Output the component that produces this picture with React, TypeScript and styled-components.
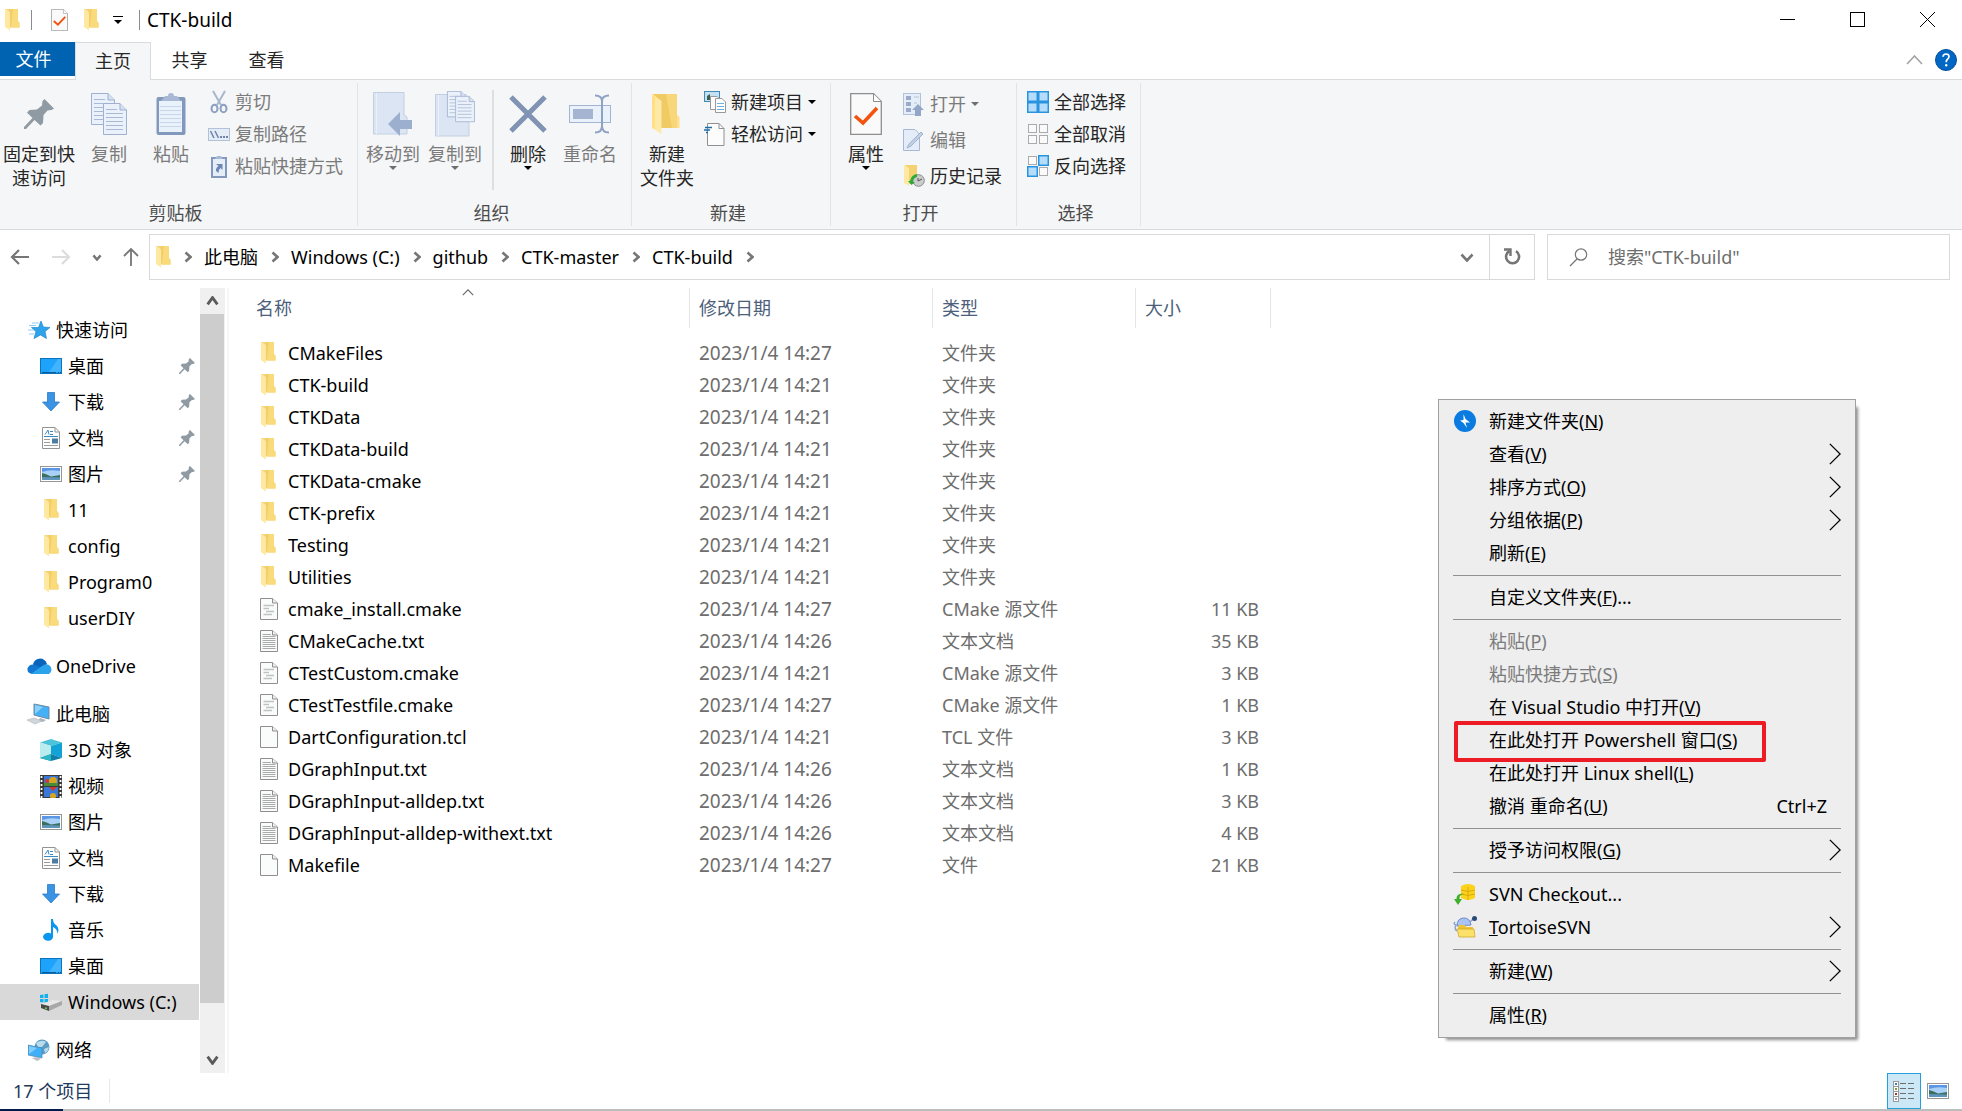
import React from "react";
import styled, { createGlobalStyle, css } from "styled-components";

const GlobalStyle = createGlobalStyle`
  * { box-sizing: border-box; }
  body {
    margin: 0;
    background: #fff;
    color: #000;
    font: 18px/24px "Noto Sans", "Noto Sans CJK SC", sans-serif;
  }
  button, input { font: inherit; color: inherit; }
  button { border: 0; padding: 0; background: none; }
  svg { display: block; flex: none; }
`;

/* ---------- window frame ---------- */

const Window = styled.div`
  position: relative;
  min-height: 100vh;
  display: flex;
  flex-direction: column;
`;

const TitleBar = styled.header`
  display: flex;
  height: 42px;
  padding-left: 5px;
`;

const QuickTools = styled.div`
  display: flex;
  align-items: center;
  height: 40px;
  flex: 1;
`;

const TitleDivider = styled.span`
  width: 1px;
  height: 20px;
  margin: 0 ${(p: { $after: number }) => p.$after}px 0 11px;
  background: #8c8c8c;
`;

const ToolButton = styled.button<{ $narrow?: boolean }>`
  display: grid;
  place-items: center;
  width: ${(p) => (p.$narrow ? 21 : 32)}px;
  height: 32px;
`;

const WindowTitle = styled.h1`
  margin: 0;
  font: inherit;
  font-size: 19px;
`;

const CaptionButton = styled.button`
  display: grid;
  place-items: center;
  width: 70px;
  height: 39px;
`;

/* ---------- tabs ---------- */

const TabBar = styled.nav`
  display: flex;
  height: 38px;
  border-bottom: 1px solid #dadbdc;
`;

const FileTab = styled.button`
  width: 75px;
  height: 34px;
  padding-right: 8px;
  background: #0063b1;
  color: #fff;
`;

const Tab = styled.button<{ $active?: boolean }>`
  width: ${(p) => (p.$active ? 76 : 77)}px;
  height: 38px;
  padding-bottom: 2px;
  color: #262626;
  ${(p) =>
    p.$active &&
    css`
      background: #f5f6f7;
      border: 1px solid #dadbdc;
      border-bottom: 0;
    `}
`;

const TabTools = styled.div`
  display: flex;
  align-items: center;
  gap: 12px;
  margin-left: auto;
  padding: 0 5px 2px 0;
`;

/* ---------- ribbon ---------- */

const Ribbon = styled.div`
  display: flex;
  padding: 3px 0;
  background: #f5f6f7;
  border-bottom: 1px solid #dadbdc;
`;

const Group = styled.section`
  display: flex;
  flex-direction: column;
  height: 143px;
  padding-top: 3px;
  border-right: 1px solid #e2e3e4;
`;

const GroupBody = styled.div<{ $flush?: boolean }>`
  display: flex;
  height: 115px;
  padding: 0 10px 0 ${(p) => (p.$flush ? 0 : 4)}px;
`;

const GroupName = styled.h2`
  margin: 0;
  padding-right: 6px;
  font: inherit;
  color: #4c4c4c;
  text-align: center;
`;

const BigButton = styled.button<{ $wide?: boolean }>`
  display: flex;
  flex-direction: column;
  align-items: center;
  width: ${(p) => (p.$wide ? 78 : 62)}px;
  padding-top: 4px;
  white-space: nowrap;
  color: #262626;
  &:disabled { color: #7b7b7b; }
`;

const BigIcon = styled.span`
  display: grid;
  place-items: center;
  height: 48px;
  margin-bottom: 4px;
`;

const SmallColumn = styled.div<{ $row: number }>`
  display: grid;
  grid-auto-rows: ${(p) => p.$row}px;
  align-content: start;
  padding: 0 4px 0 6px;
`;

const SmallButton = styled.button`
  display: flex;
  align-items: center;
  gap: 5px;
  white-space: nowrap;
  color: #262626;
  &:disabled { color: #7b7b7b; }
`;

const SmallIcon = styled.span`
  display: grid;
  place-items: center;
  width: 22px;
  height: 24px;
`;

const InnerDivider = styled.span`
  width: 2px;
  height: 100px;
  margin: 4px 3px 0 6px;
  background: #dedfe1;
`;

/* ---------- address row ---------- */

const AddressRow = styled.div`
  display: flex;
  align-items: center;
  height: 58px;
  padding: 0 12px 4px 0;
`;

const NavButtons = styled.div`
  display: flex;
  align-items: center;
  justify-content: space-between;
  width: 149px;
  padding: 0 10px;
`;

const AddressBox = styled.div`
  display: flex;
  flex: 1;
  height: 46px;
  margin-right: 12px;
  border: 1px solid #d9d9d9;
`;

const Crumbs = styled.ol`
  display: flex;
  align-items: center;
  gap: 12px;
  flex: 1;
  margin: 0;
  padding: 0 6px;
  list-style: none;
`;

const Crumb = styled.li`
  display: flex;
  align-items: center;
  gap: 13px;
`;

const CrumbLink = styled.a`
  color: #000;
  text-decoration: none;
`;

const AddressButton = styled.button<{ $divided?: boolean }>`
  display: grid;
  place-items: center;
  width: 45px;
  border-left: ${(p) => (p.$divided ? "1px solid #d9d9d9" : "0")};
`;

const SearchBox = styled.label`
  display: flex;
  align-items: center;
  gap: 20px;
  width: 403px;
  height: 46px;
  padding-left: 21px;
  border: 1px solid #d9d9d9;
`;

const SearchInput = styled.input`
  flex: 1;
  min-width: 0;
  border: 0;
  padding: 0;
  outline: 0;
  background: none;
  &::placeholder { color: #6d6d6d; opacity: 1; }
`;

/* ---------- navigation pane ---------- */

const Main = styled.main`
  display: flex;
  flex: 1;
`;

const Sidebar = styled.aside`
  display: flex;
  flex-direction: column;
  gap: 12px;
  width: 199px;
  margin-right: 1px;
  padding-top: 24px;
`;

const TreeGroup = styled.ul`
  margin: 0;
  padding: 0;
  list-style: none;
`;

const TreeItem = styled.a<{ $root?: boolean; $selected?: boolean }>`
  display: flex;
  align-items: center;
  height: 36px;
  padding: 0 4px 0 ${(p) => (p.$root ? 27 : 39)}px;
  background: ${(p) => (p.$selected ? "#d9d9d9" : "none")};
  color: #000;
  text-decoration: none;
  white-space: nowrap;
`;

const TreeIcon = styled.span`
  display: grid;
  place-items: center;
  width: 24px;
  margin-right: 5px;
`;

const TreeLabel = styled.span`
  flex: 1;
`;

const Scrollbar = styled.div`
  display: flex;
  flex-direction: column;
  width: 25px;
  margin-right: 2px;
  background: #f0f0f0;
`;

const ScrollButton = styled.button`
  display: grid;
  place-items: center;
  height: 26px;
`;

const ScrollTrack = styled.div`
  display: flex;
  flex-direction: column;
  flex: 1;
`;

const ScrollThumb = styled.div`
  width: 24px;
  height: 94%;
  background: #cdcdcd;
`;

/* ---------- file list ---------- */

const ListPane = styled.div`
  flex: 1;
  border-left: 2px solid #f6f6f6;
`;

const Table = styled.table`
  table-layout: fixed;
  width: 1042px;
  border-collapse: collapse;
`;

const Col = styled.col<{ $width: number }>`
  width: ${(p) => p.$width}px;
`;

const HeadCell = styled.th`
  height: 49px;
  padding: 0;
  font-weight: 400;
  text-align: left;
  vertical-align: top;
`;

const HeadLabel = styled.div<{ $first?: boolean }>`
  position: relative;
  display: flex;
  align-items: center;
  height: 40px;
  padding-left: ${(p) => (p.$first ? 27 : 9)}px;
  border-right: 1px solid #e5e5e5;
  color: #4c607a;
`;

const SortMark = styled.span`
  position: absolute;
  top: 1px;
  left: 0;
  right: 0;
  display: flex;
  justify-content: center;
  padding-left: 18px;
`;

const Cell = styled.td<{ $right?: boolean }>`
  height: 32px;
  padding: 0 ${(p) => (p.$right ? 12 : 0)}px 0 9px;
  color: #6d6d6d;
  text-align: ${(p) => (p.$right ? "right" : "left")};
  white-space: nowrap;
`;

const DateCell = styled(Cell)`
  font-size: 19px;
`;

const NameCell = styled(Cell)`
  padding-left: 29px;
  color: #000;
`;

const FileName = styled.span`
  display: flex;
  align-items: center;
  gap: 9px;
`;

const FileIconSlot = styled.span`
  display: grid;
  place-items: center;
  width: 21px;
`;

/* ---------- status bar ---------- */

const StatusBar = styled.footer`
  display: flex;
  align-items: center;
  height: 36px;
  padding: 0 7px 0 13px;
  color: #1e395b;
`;

const StatusText = styled.span`
  padding-right: 17px;
  border-right: 1px solid #e8e8e8;
`;

const ViewButtons = styled.div`
  display: flex;
  align-items: center;
  margin-left: auto;
`;

const ViewButton = styled.button<{ $on?: boolean }>`
  display: grid;
  place-items: center;
  width: 34px;
  height: 36px;
  ${(p) =>
    p.$on &&
    css`
      background: #cce8f6;
      border: 1px solid #26a0da;
    `}
`;

const WindowEdge = styled.div`
  height: 2px;
  background: linear-gradient(to right, #001c4d 63px, #bdbdbd 63px);
`;

/* ---------- context menu ---------- */

const Menu = styled.div`
  position: absolute;
  top: 399px;
  right: 106px;
  width: 418px;
  padding: 4px 0 6px;
  background: #eeeeee;
  border: 1px solid #a0a0a0;
  box-shadow: 5px 5px 3px -3px #8c8c8c;
`;

const MenuItem = styled.button`
  position: relative;
  display: flex;
  align-items: center;
  width: 100%;
  height: 33px;
  padding: 0 14px;
  text-align: left;
  white-space: nowrap;
  &:disabled { color: #7c7c7c; }
`;

const MenuIcon = styled.span`
  display: grid;
  place-items: center;
  width: 24px;
  margin-right: 12px;
`;

const MenuLabel = styled.span`
  flex: 1;
`;

const Shortcut = styled.span`
  margin-right: 14px;
`;

const MenuDivider = styled.hr`
  height: 1px;
  margin: 6px 14px 4px;
  border: 0;
  background: #919191;
`;

const Highlight = styled.span`
  position: absolute;
  top: -2px;
  left: 15px;
  width: 312px;
  height: 41px;
  border: 4px solid #ed1c24;
  border-radius: 2px;
`;

/* ---------- drawings ---------- */

const Caret = ({ color = "#000" }: { color?: string }) => (
  <svg width="8" height="4" viewBox="0 0 8 4"><path d="M0 0h8L4 4z" fill={color} /></svg>
);

const Chevron = ({ w, h, dir, stroke = 1, color = "#000" }: { w: number; h: number; dir: "up" | "down" | "right"; stroke?: number; color?: string }) => {
  const p = stroke / 2 + 0.2;
  const d = {
    up: `M${p} ${h - p}L${w / 2} ${p}L${w - p} ${h - p}`,
    down: `M${p} ${p}L${w / 2} ${h - p}L${w - p} ${p}`,
    right: `M${p} ${p}L${w - p} ${h / 2}L${p} ${h - p}`,
  }[dir];
  return <svg width={w} height={h} viewBox={`0 0 ${w} ${h}`}><path d={d} fill="none" stroke={color} strokeWidth={stroke} /></svg>;
};

const Folder = () => (
  <svg width="15" height="22" viewBox="0 0 15 22">
    <path d="M4 0H13V12L14.500 14V18.500H4z" fill="#f3cf6a" />
    <path d="M8 0H13V12L14.500 14V18.500H6z" fill="#f9db7c" />
    <path d="M0 0L5 3.500V21.500L0 18z" fill="#ffe9a2" />
    <path d="M0 0H4L5 3.500z" fill="#f5d67c" />
  </svg>
);

const BigFolder = () => (
  <svg width="30" height="42" viewBox="0 0 30 42">
    <path d="M24 34L30 33L22 35z" fill="#ddd" />
    <path d="M0 1H25V22L27.500 24V35H8z" fill="#ffe08a" />
    <path d="M1 1H25L22 35H8V8z" fill="#f0cb63" />
    <path d="M14 1H25V35H20z" fill="#f8d77a" />
    <path d="M0 1L9.500 8V41L0 35z" fill="#ffe9a8" />
    <path d="M0 2L3 4V36L0 35z" fill="#ffdf80" />
  </svg>
);

const CheckPage = ({ w, h }: { w: number; h: number }) => (
  <svg width={w} height={h} viewBox="0 0 32 42">
    <path d="M.7.7H23.500L31.300 8.500V41.300H.7z" fill="#fafafa" stroke="#8e8e8e" strokeWidth="1.300" />
    <path d="M23.500 1V8.500H31" fill="#fff" stroke="#8e8e8e" />
    <path d="M5 23L13 30L27 15" fill="none" stroke="#f2540f" strokeWidth="3.600" />
  </svg>
);

const Pin = ({ size, color = "#8f9aa3" }: { size: number; color?: string }) => (
  <svg width={size} height={size} viewBox="0 0 30 30">
    <path d="M20.500 0L30 9.500L27.500 11L23.500 11.500L19.500 16L19 24L16.500 26.500L10.500 21L2 30H0V28L8.500 19L3 13.500L5.500 11L13 10.500L18 6.500L18.500 2z" fill={color} />
  </svg>
);

const PageShape = ({ x, y }: { x: number; y: number }) => (
  <g transform={`translate(${x} ${y})`}>
    <path d="M.5.5H17L23.500 7V31.500H.5z" fill="#eaf1fa" stroke="#9fb1cf" />
    <path d="M17 .5V7H23.500" fill="#d4e0f0" stroke="#9fb1cf" />
    <path d="M3 6.500H14M3 10.500H20M3 14.500H20M3 18.500H20M3 22.500H20M3 26.500H20" stroke="#a9bad4" />
  </g>
);

const CopyIcon = () => <svg width="36" height="43" viewBox="0 0 36 43"><PageShape x={0} y={0} /><PageShape x={12} y={10} /></svg>;

const PasteIcon = () => (
  <svg width="30" height="44" viewBox="0 0 30 44">
    <rect x=".5" y="5" width="29" height="38" rx="2" fill="#8298bd" />
    <path d="M3 9H26V40H3z" fill="#e9f1fb" />
    <path d="M4 14.500H25M4 18.500H25M4 22.500H25M4 26.500H25M4 30.500H25M4 34.500H25" stroke="#c7d6ea" />
    <path d="M5 9L9 4H12Q12 1 15 1Q18 1 18 4H21L25 9z" fill="#a9b9d3" />
  </svg>
);

const ScissorsIcon = () => (
  <svg width="18" height="24" viewBox="0 0 18 24">
    <path d="M3 1L11 15M15 1L7 15" stroke="#a9b7cd" strokeWidth="2" />
    <ellipse cx="4.500" cy="18.500" rx="3" ry="3.700" fill="none" stroke="#8ca0c2" strokeWidth="2" />
    <ellipse cx="13.500" cy="18.500" rx="3" ry="3.700" fill="none" stroke="#8ca0c2" strokeWidth="2" />
  </svg>
);

const PathIcon = () => (
  <svg width="22" height="13" viewBox="0 0 22 13">
    <rect x=".5" y=".5" width="21" height="12" fill="#e3ecf7" stroke="#b2c1d8" />
    <path d="M2.500 3L6 10M7 3L10.500 10" stroke="#6f84a6" strokeWidth="1.500" />
    <path d="M12 9h2M15 9h2M18 9h2" stroke="#6f84a6" strokeWidth="2" />
  </svg>
);

const ShortcutIcon = () => (
  <svg width="16" height="23" viewBox="0 0 16 23">
    <rect x="1" y="3" width="14" height="19" fill="#e4edf8" stroke="#8298bd" strokeWidth="2" />
    <path d="M4 4L6 1H10L12 4z" fill="#a9b9d3" />
    <path d="M5 9H11.500V15L9.500 13Q7.500 14.500 7.500 18L5 16Q4.500 13 7.500 11z" fill="#6f87b0" />
  </svg>
);

const MoveIcon = () => (
  <svg width="40" height="44" viewBox="0 0 40 44">
    <path d="M.5.5H31V23L34 25V42H.5z" fill="#dbe5f3" stroke="#c2cfe3" />
    <path d="M3.500 1V42" stroke="#eaf0f9" />
    <path d="M15 32L27 20V28H39V37H27V44z" fill="#9dafcf" />
  </svg>
);

const CopyToIcon = () => (
  <svg width="40" height="46" viewBox="0 0 40 46">
    <path d="M.5 3.500H31V30L34 32V45H.5z" fill="#dbe5f3" stroke="#c2cfe3" />
    <path d="M3.500 4V45" stroke="#eaf0f9" />
    <g transform="translate(12 0) scale(.82)"><PageShape x={0} y={0} /><PageShape x={10} y={6} /></g>
  </svg>
);

const DeleteIcon = () => <svg width="38" height="38" viewBox="0 0 38 38"><path d="M2 2L36 36M36 2L2 36" stroke="#8093b3" strokeWidth="5" /></svg>;

const RenameIcon = () => (
  <svg width="43" height="40" viewBox="0 0 43 40">
    <rect x=".5" y="11.500" width="41" height="17" fill="#e9f1fb" stroke="#a3b4d0" />
    <rect x="4" y="15" width="20" height="10" fill="#a5b5d1" />
    <path d="M26 1.500Q33 1.500 33 7V32Q33 38.500 26 38.500M40 1.500Q33 1.500 33 7M33 32Q33 38.500 40 38.500" fill="none" stroke="#8fa2c4" strokeWidth="2" />
  </svg>
);

const NewItemIcon = () => (
  <svg width="22" height="22" viewBox="0 0 22 22">
    <rect x=".5" y=".5" width="15" height="10" fill="#c6e2f2" stroke="#3f8bb5" />
    <path d="M3 9V5L6 3V9z" fill="#3d5f50" />
    <path d="M6.500 5.500H13L16 8.500V18.500H6.500z" fill="#fff" stroke="#999" />
    <path d="M11.500 7.500H18L21.500 11V21.500H11.500z" fill="#fff" stroke="#999" />
    <path d="M13 12.500H20M13 15.500H20M13 18.500H20" stroke="#6eaee0" />
  </svg>
);

const EasyAccessIcon = () => (
  <svg width="22" height="23" viewBox="0 0 22 23">
    <path d="M3.500.5H15L20 5.500V22.500H3.500z" fill="#fcfcfc" stroke="#909090" />
    <path d="M15 .5V5.500H20" fill="none" stroke="#909090" />
    <path d="M1 4.500H8M0 7H6M2 9.500H4" stroke="#1f6ea8" strokeWidth="1.500" />
  </svg>
);

const OpenIcon = () => (
  <svg width="22" height="23" viewBox="0 0 22 23">
    <rect x=".5" y=".5" width="17" height="21" fill="#e5edf8" stroke="#b4c2d9" />
    <path d="M3 3h5v4H3zM3 9h5v4H3zM3 15h5v4H3z" fill="#9aabc9" />
    <path d="M11 4h5M11 10h3" stroke="#b4c2d9" />
    <path d="M15 11L21 17H18V23H12V17H9z" fill="#93a6c8" />
  </svg>
);

const EditIcon = () => (
  <svg width="22" height="22" viewBox="0 0 22 22">
    <path d="M.5.5H12L16.500 5V21.500H.5z" fill="#e3ecf8" stroke="#a8b8d3" />
    <path d="M4 19L6 15L18 3L20 5L8 17z" fill="#c3d0e4" stroke="#93a6c8" strokeWidth=".8" />
  </svg>
);

const HistoryIcon = () => (
  <svg width="22" height="22" viewBox="0 0 22 22">
    <path d="M2 0H14V19H5z" fill="#f5d270" /><path d="M1 0L6 3V21L1 18z" fill="#ffe9a2" />
    <circle cx="15.500" cy="15.500" r="5.800" fill="#ccc" stroke="#8b8b8b" />
    <path d="M15 13v3l4-2" fill="none" stroke="#555" />
    <path d="M5 16H7Q8 10 14 9V12Q10 13 10 17H12L8.500 20z" fill="#2cab3a" />
  </svg>
);

const SelectIcon = ({ on }: { on: boolean[] }) => (
  <svg width="22" height="22" viewBox="0 0 22 22">
    {on.map((lit, i) => (
      <rect key={i} x={(i % 2) * 11 + (lit ? 0.75 : 1.5)} y={Math.floor(i / 2) * 11 + (lit ? 0.75 : 1.5)}
        width={lit ? 9.5 : 8} height={lit ? 9.5 : 8} fill={lit ? "#b5ddfb" : "#fafafa"}
        stroke={lit ? "#2a93e0" : "#ababab"} strokeWidth={lit ? 1.5 : 1} />
    ))}
  </svg>
);

const HelpIcon = () => (
  <svg width="22" height="22" viewBox="0 0 22 22">
    <circle cx="11" cy="11" r="10.500" fill="#0067c5" stroke="#07509a" />
    <path d="M8 7.800Q8.200 5 11 5Q14 5 14 7.600Q14 9.200 12.500 10.200Q11.200 11.100 11.200 13.200" fill="none" stroke="#fff" strokeWidth="1.700" />
    <circle cx="11.200" cy="16.200" r="1.200" fill="#fff" />
  </svg>
);

const Arrow = ({ dir, color }: { dir: "left" | "right"; color: string }) => (
  <svg width="20" height="16" viewBox="0 0 20 16">
    <path d={dir === "left" ? "M9 1L2 8L9 15M2 8H19" : "M11 1L18 8L11 15M18 8H1"} fill="none" stroke={color} strokeWidth="2.200" />
  </svg>
);

const UpArrow = () => <svg width="16" height="20" viewBox="0 0 16 20"><path d="M1 9L8 2L15 9M8 2V19" fill="none" stroke="#767676" strokeWidth="1.800" /></svg>;

const RefreshIcon = () => (
  <svg width="17" height="18" viewBox="0 0 17 18">
    <path d="M12 3.200A6.500 6.500 0 1 1 5.500 3" fill="none" stroke="#757575" strokeWidth="2.600" />
    <path d="M0 1.500H6.500V8" fill="none" stroke="#757575" strokeWidth="2.400" />
  </svg>
);

const SearchIcon = () => (
  <svg width="19" height="19" viewBox="0 0 19 19">
    <circle cx="12" cy="6.500" r="5.700" fill="none" stroke="#757575" strokeWidth="1.200" /><path d="M8 11L1 18" stroke="#757575" strokeWidth="1.300" />
  </svg>
);

const StarIcon = () => (
  <svg width="22" height="18" viewBox="0 0 22 18">
    <path d="M13 0L15.300 6L22 6.500L17 10.500L18.500 17.500L12.500 14L6 17.500L8 10.500L3.500 6.500H10.500z" fill="#2fa3ea" stroke="#1e86cc" strokeWidth=".7" />
    <path d="M4 2H11M1 4.500H8M0 9H6M1 13H6" stroke="#8fcdf3" />
  </svg>
);

const DesktopIcon = () => (
  <svg width="22" height="16" viewBox="0 0 22 16">
    <rect x=".5" y=".5" width="21" height="15" fill="#1ea3fc" stroke="#0b74bd" />
    <path d="M9 14L18 1H21V14z" fill="#41b3ff" />
    <path d="M2 14.500H16M18 14.500h1M20 14.500h1" stroke="#0a5d9b" />
  </svg>
);

const DownloadIcon = () => <svg width="18" height="20" viewBox="0 0 18 20"><path d="M5.500.5H12.500V10H17.500L9 19L.5 10H5.500z" fill="#3b93e3" stroke="#2a7cc8" strokeWidth=".8" /></svg>;

const DocumentIcon = () => (
  <svg width="18" height="22" viewBox="0 0 18 22">
    <path d="M.5.500H13L17.500 5V21.500H.5z" fill="#fff" stroke="#949494" /><path d="M13 .5V5H17.500" fill="none" stroke="#949494" />
    <path d="M3 7.500L6 3L7 7.500M8 4.500H11M8 7.500H11M2 9.500H16" fill="none" stroke="#3c8ac4" />
    <path d="M2 12.500H8M2 15.500H8M2 18.500H16" stroke="#9b9b9b" /><rect x="10" y="11.500" width="6" height="5" fill="#4c7ba3" />
  </svg>
);

const PictureIcon = () => (
  <svg width="22" height="16" viewBox="0 0 22 16">
    <rect x=".5" y=".5" width="21" height="15" fill="#fff" stroke="#969696" />
    <path d="M2 2H20V14H2z" fill="#a9d1f7" /><path d="M2 2H20V5Q10 3 2 6z" fill="#5a95e6" />
    <path d="M2 7Q7 8 11 10.500L20 9V12H2z" fill="#3d6f5e" /><path d="M2 11L20 11.500V14H2z" fill="#5f95bd" />
  </svg>
);

const CloudIcon = () => (
  <svg width="25" height="17" viewBox="0 0 25 17">
    <path d="M6 8Q6 1 13 .5Q18 .5 20 6L12 12z" fill="#0a64bc" />
    <path d="M5 16Q0 15 .5 10.500Q2 6 7 6.500L15 10L10 16z" fill="#1377d1" />
    <path d="M4 16L15 8Q20 4.500 23.500 8.500Q26 13 22 16z" fill="#2ba3ec" />
  </svg>
);

const ComputerIcon = () => (
  <svg width="24" height="22" viewBox="0 0 24 22">
    <path d="M7 1L22 4V16L7 12z" fill="#45b0f5" stroke="#6d8ba2" /><path d="M8 2L16 4L8 11z" fill="#8bd0fb" />
    <path d="M13 15L19 17L16 19L11 18z" fill="#a9b4bc" /><path d="M0 17L7 15L15 18L8 21z" fill="#d0d6da" stroke="#aeb6bc" strokeWidth=".6" />
  </svg>
);

const CubeIcon = () => (
  <svg width="22" height="22" viewBox="0 0 22 22">
    <path d="M11 0L22 3.500L11 7L0 3.500z" fill="#4cc3d9" /><path d="M0 3.500L11 7V15L0 19z" fill="#b9ecef" />
    <path d="M22 3.500L11 7V15L22 19z" fill="#11a3d6" /><path d="M0 19L11 15L22 19L11 22z" fill="#0d7fa8" />
    <path d="M0 19L11 15V22z" fill="#2bb6c4" />
  </svg>
);

const VideoIcon = () => (
  <svg width="22" height="23" viewBox="0 0 22 23">
    <rect width="22" height="23" fill="#3a3a3a" /><rect x="4" y="1" width="14" height="10" fill="#3a78d8" /><rect x="4" y="12" width="14" height="10" fill="#3a78d8" />
    <path d="M1.500 1V23M20.500 1V23" stroke="#fff" strokeWidth="1.800" strokeDasharray="2 2" />
    <circle cx="13" cy="6" r="4" fill="#d8a520" /><path d="M4 8H18V11H4z" fill="#4a8b35" /><circle cx="7" cy="6" r="2" fill="#d2392b" />
    <path d="M9 12h8l-4 4z" fill="#d2392b" /><circle cx="13" cy="21" r="3" fill="#d8a520" />
  </svg>
);

const MusicIcon = () => (
  <svg width="17" height="22" viewBox="0 0 17 22">
    <path d="M8 0H10Q10 4 13 6Q17 9 14.500 15Q14.500 10 10 8V17A5 4 0 1 1 8 14.500z" fill="#0a95f0" />
  </svg>
);

const DriveIcon = () => (
  <svg width="24" height="20" viewBox="0 0 24 20">
    <path d="M1 3L4.500 2.500V6H1zM5.500 2.300L9 1.800V6H5.500zM1 7H4.500V10.500L1 10zM5.500 7H9V11L5.500 10.500z" fill="#12b1ee" />
    <path d="M2 12L14 8L23 9L10 14z" fill="#e7e7e7" /><path d="M10 14L23 9V13L10 19z" fill="#a8a8a8" /><path d="M2 12L10 14V19L2 16z" fill="#484848" /><path d="M6 16l2 .5" stroke="#6bd34c" strokeWidth="1.500" />
  </svg>
);

const NetworkIcon = () => (
  <svg width="22" height="22" viewBox="0 0 22 22">
    <circle cx="14" cy="8" r="7.500" fill="#5b9cc4" /><path d="M8 4Q14 0 18 3L14 8L10 8zM16 10L21 8Q20 13 17 14z" fill="#b8dceb" />
    <path d="M0 6L14 9V19L0 16z" fill="#3fb0f7" stroke="#4f85ab" strokeWidth=".7" /><path d="M1 7L9 9L1 15z" fill="#84cdfb" />
    <path d="M4 19L9 18L13 20L9 22z" fill="#b9c1c7" />
  </svg>
);

const FileIcon = ({ kind }: { kind: string }) => (
  <svg width="18" height="22" viewBox="0 0 18 22">
    <path d="M.5.500H12.500L17.500 5V21.500H.5z" fill="#fafbfb" stroke="#8f8f8f" /><path d="M12.500.5V5H17.500" fill="#eee" stroke="#8f8f8f" />
    {kind === "text" && <path d="M2.500 4.500H11M2.500 6.500H15.500M2.500 8.500H15.500M2.500 10.500H15.500M2.500 12.500H15.500M2.500 14.500H15.500M2.500 16.500H15.500M2.500 18.500H15.500" stroke="#aaa" />}
    {kind === "cmake" && <path d="M3.500 7.500H14M3.500 10.500H9M6 13.500H14M3.500 16.500H12" stroke="#bfc3c4" strokeWidth="1.300" />}
  </svg>
);

const DetailsViewIcon = () => (
  <svg width="22" height="22" viewBox="0 0 22 22">
    {[0, 1, 2, 3].map((i) => (
      <g key={i}>
        <rect x=".5" y={i * 5 + 1.5} width="5" height="5" fill="#fff" stroke="#999" />
        <rect x="2" y={i * 5 + 3} width="2" height="2" fill={["#4a7fa8", "#8a9a3a", "#a83a2c", "#999"][i]} />
        <path d={`M7 ${i * 5 + 3.5}h6M15 ${i * 5 + 3.5}h6`} stroke="#6e6e6e" />
      </g>
    ))}
  </svg>
);

const BoltIcon = () => (
  <svg width="22" height="22" viewBox="0 0 22 22">
    <circle cx="11" cy="11" r="11" fill="#0a7be0" /><path d="M9.500 4L11.500 9L16 12.500L11.500 12.500L13 18L9.500 13L6 10.500L9.500 10z" fill="#fff" />
  </svg>
);

const CheckoutIcon = () => (
  <svg width="22" height="22" viewBox="0 0 22 22">
    <path d="M7 3Q14-1 21 3V15Q14 19 7 15z" fill="#fbd21c" /><path d="M7 7Q14 10 21 7M7 11Q14 14 21 11M14 4V17" fill="none" stroke="#dca90a" />
    <path d="M11 11Q5 11 5.500 16H8L4 22L0 16H2.500Q2 10 11 11z" fill="#3fae2a" />
  </svg>
);

const TortoiseIcon = () => (
  <svg width="24" height="22" viewBox="0 0 24 22">
    <path d="M4 10Q4 2 11 2Q17 2 18 9z" fill="#a9c3f2" stroke="#6e8cc9" /><path d="M2 6Q0 8 3 9Q1 13 4 15M17 6L20 3" fill="none" stroke="#8ea3cc" strokeWidth="1.500" />
    <circle cx="21.500" cy="2.500" r="2.500" fill="#2a4a78" />
    <path d="M5 12L6 9H12L13 11H20V21H6z" fill="#eec230" /><path d="M4 13H21L22 21H6z" fill="#fbe06a" stroke="#cfa51c" strokeWidth=".7" />
  </svg>
);

/* ---------- data ---------- */

type Node = { label: string; icon: React.ReactNode; pinned?: boolean; selected?: boolean };

const tree: { root: Node; children: Node[] }[] = [
  {
    root: { label: "快速访问", icon: <StarIcon /> },
    children: [
      { label: "桌面", icon: <DesktopIcon />, pinned: true },
      { label: "下载", icon: <DownloadIcon />, pinned: true },
      { label: "文档", icon: <DocumentIcon />, pinned: true },
      { label: "图片", icon: <PictureIcon />, pinned: true },
      { label: "11", icon: <Folder /> },
      { label: "config", icon: <Folder /> },
      { label: "Program0", icon: <Folder /> },
      { label: "userDIY", icon: <Folder /> },
    ],
  },
  { root: { label: "OneDrive", icon: <CloudIcon /> }, children: [] },
  {
    root: { label: "此电脑", icon: <ComputerIcon /> },
    children: [
      { label: "3D 对象", icon: <CubeIcon /> },
      { label: "视频", icon: <VideoIcon /> },
      { label: "图片", icon: <PictureIcon /> },
      { label: "文档", icon: <DocumentIcon /> },
      { label: "下载", icon: <DownloadIcon /> },
      { label: "音乐", icon: <MusicIcon /> },
      { label: "桌面", icon: <DesktopIcon /> },
      { label: "Windows (C:)", icon: <DriveIcon />, selected: true },
    ],
  },
  { root: { label: "网络", icon: <NetworkIcon /> }, children: [] },
];

const files: [string, string, string, string, string][] = [
  ["CMakeFiles", "14:27", "文件夹", "", "folder"],
  ["CTK-build", "14:21", "文件夹", "", "folder"],
  ["CTKData", "14:21", "文件夹", "", "folder"],
  ["CTKData-build", "14:21", "文件夹", "", "folder"],
  ["CTKData-cmake", "14:21", "文件夹", "", "folder"],
  ["CTK-prefix", "14:21", "文件夹", "", "folder"],
  ["Testing", "14:21", "文件夹", "", "folder"],
  ["Utilities", "14:21", "文件夹", "", "folder"],
  ["cmake_install.cmake", "14:27", "CMake 源文件", "11 KB", "cmake"],
  ["CMakeCache.txt", "14:26", "文本文档", "35 KB", "text"],
  ["CTestCustom.cmake", "14:21", "CMake 源文件", "3 KB", "cmake"],
  ["CTestTestfile.cmake", "14:27", "CMake 源文件", "1 KB", "cmake"],
  ["DartConfiguration.tcl", "14:21", "TCL 文件", "3 KB", "blank"],
  ["DGraphInput.txt", "14:26", "文本文档", "1 KB", "text"],
  ["DGraphInput-alldep.txt", "14:26", "文本文档", "3 KB", "text"],
  ["DGraphInput-alldep-withext.txt", "14:26", "文本文档", "4 KB", "text"],
  ["Makefile", "14:27", "文件", "21 KB", "blank"],
];

type Entry = { label: string; icon?: React.ReactNode; sub?: boolean; off?: boolean; keys?: string; marked?: boolean };

/* "&" stands before the access key; null is a divider */
const menu: (Entry | null)[] = [
  { label: "新建文件夹(&N)", icon: <BoltIcon /> },
  { label: "查看(&V)", sub: true },
  { label: "排序方式(&O)", sub: true },
  { label: "分组依据(&P)", sub: true },
  { label: "刷新(&E)" },
  null,
  { label: "自定义文件夹(&F)..." },
  null,
  { label: "粘贴(&P)", off: true },
  { label: "粘贴快捷方式(&S)", off: true },
  { label: "在 Visual Studio 中打开(&V)" },
  { label: "在此处打开 Powershell 窗口(&S)", marked: true },
  { label: "在此处打开 Linux shell(&L)" },
  { label: "撤消 重命名(&U)", keys: "Ctrl+Z" },
  null,
  { label: "授予访问权限(&G)", sub: true },
  null,
  { label: "SVN Chec&kout...", icon: <CheckoutIcon /> },
  { label: "&TortoiseSVN", icon: <TortoiseIcon />, sub: true },
  null,
  { label: "新建(&W)", sub: true },
  null,
  { label: "属性(&R)" },
];

/* ---------- parts ---------- */

const Big = ({ icon, lines, off, caret, wide }: { icon: React.ReactNode; lines: string[]; off?: boolean; caret?: boolean; wide?: boolean }) => (
  <BigButton disabled={off} $wide={wide}>
    <BigIcon>{icon}</BigIcon>
    {lines.map((line) => <span key={line}>{line}</span>)}
    {caret && <Caret color={off ? "#6e6e6e" : "#000"} />}
  </BigButton>
);

const Small = ({ icon, label, off, caret }: { icon: React.ReactNode; label: string; off?: boolean; caret?: boolean }) => (
  <SmallButton disabled={off}>
    <SmallIcon>{icon}</SmallIcon>
    {label}
    {caret && <Caret color={off ? "#6e6e6e" : "#000"} />}
  </SmallButton>
);

const TreeRow = ({ node, root }: { node: Node; root?: boolean }) => (
  <li>
    <TreeItem href="#" $root={root} $selected={node.selected}>
      <TreeIcon>{node.icon}</TreeIcon>
      <TreeLabel>{node.label}</TreeLabel>
      {node.pinned && <Pin size={16} />}
    </TreeItem>
  </li>
);

const AccessLabel = ({ text }: { text: string }) => {
  const [before, rest] = text.split("&");
  return <MenuLabel>{before}<u>{rest[0]}</u>{rest.slice(1)}</MenuLabel>;
};

const ContextMenu = () => (
  <Menu role="menu">
    {menu.map((item, i) =>
      item ? (
        <MenuItem key={i} role="menuitem" disabled={item.off}>
          <MenuIcon>{item.icon}</MenuIcon>
          <AccessLabel text={item.label} />
          {item.keys && <Shortcut>{item.keys}</Shortcut>}
          {item.sub && <Chevron w={12} h={22} dir="right" stroke={1.3} />}
          {item.marked && <Highlight />}
        </MenuItem>
      ) : (
        <MenuDivider key={i} />
      )
    )}
  </Menu>
);

export default function App() {
  return (
    <Window>
      <GlobalStyle />
      <TitleBar>
        <QuickTools>
          <Folder />
          <TitleDivider $after={11} />
          <ToolButton aria-label="属性"><CheckPage w={17} h={22} /></ToolButton>
          <ToolButton aria-label="新建文件夹"><Folder /></ToolButton>
          <ToolButton $narrow aria-label="自定义快速访问工具栏">
            <svg width="10" height="9" viewBox="0 0 10 9"><path d="M0 .5H10" stroke="#000" /><path d="M1 4H9L5 8z" /></svg>
          </ToolButton>
          <TitleDivider $after={7} />
          <WindowTitle>CTK-build</WindowTitle>
        </QuickTools>
        <CaptionButton aria-label="最小化"><svg width="15" height="15"><path d="M0 7.500H15" stroke="#000" /></svg></CaptionButton>
        <CaptionButton aria-label="最大化"><svg width="15" height="15"><rect x=".5" y=".5" width="14" height="14" fill="none" stroke="#000" /></svg></CaptionButton>
        <CaptionButton aria-label="关闭"><svg width="15" height="15"><path d="M0 0L15 15M15 0L0 15" stroke="#000" /></svg></CaptionButton>
      </TitleBar>

      <TabBar>
        <FileTab>文件</FileTab>
        <Tab $active>主页</Tab>
        <Tab>共享</Tab>
        <Tab>查看</Tab>
        <TabTools>
          <button aria-label="最小化功能区"><Chevron w={17} h={10} dir="up" stroke={1.6} color="#a3a3a3" /></button>
          <button aria-label="帮助"><HelpIcon /></button>
        </TabTools>
      </TabBar>

      <Ribbon>
        <Group>
          <GroupBody $flush>
            <Big wide icon={<Pin size={30} />} lines={["固定到快", "速访问"]} />
            <Big off icon={<CopyIcon />} lines={["复制"]} />
            <Big off icon={<PasteIcon />} lines={["粘贴"]} />
            <SmallColumn $row={32}>
              <Small off icon={<ScissorsIcon />} label="剪切" />
              <Small off icon={<PathIcon />} label="复制路径" />
              <Small off icon={<ShortcutIcon />} label="粘贴快捷方式" />
            </SmallColumn>
          </GroupBody>
          <GroupName>剪贴板</GroupName>
        </Group>
        <Group>
          <GroupBody>
            <Big off caret icon={<MoveIcon />} lines={["移动到"]} />
            <Big off caret icon={<CopyToIcon />} lines={["复制到"]} />
            <InnerDivider />
            <Big caret icon={<DeleteIcon />} lines={["删除"]} />
            <Big off icon={<RenameIcon />} lines={["重命名"]} />
          </GroupBody>
          <GroupName>组织</GroupName>
        </Group>
        <Group>
          <GroupBody>
            <Big icon={<BigFolder />} lines={["新建", "文件夹"]} />
            <SmallColumn $row={32}>
              <Small caret icon={<NewItemIcon />} label="新建项目" />
              <Small caret icon={<EasyAccessIcon />} label="轻松访问" />
            </SmallColumn>
          </GroupBody>
          <GroupName>新建</GroupName>
        </Group>
        <Group>
          <GroupBody>
            <Big caret icon={<CheckPage w={32} h={42} />} lines={["属性"]} />
            <SmallColumn $row={36}>
              <Small off caret icon={<OpenIcon />} label="打开" />
              <Small off icon={<EditIcon />} label="编辑" />
              <Small icon={<HistoryIcon />} label="历史记录" />
            </SmallColumn>
          </GroupBody>
          <GroupName>打开</GroupName>
        </Group>
        <Group>
          <GroupBody>
            <SmallColumn $row={32}>
              <Small icon={<SelectIcon on={[true, true, true, true]} />} label="全部选择" />
              <Small icon={<SelectIcon on={[false, false, false, false]} />} label="全部取消" />
              <Small icon={<SelectIcon on={[false, true, true, false]} />} label="反向选择" />
            </SmallColumn>
          </GroupBody>
          <GroupName>选择</GroupName>
        </Group>
      </Ribbon>

      <AddressRow>
        <NavButtons>
          <button aria-label="后退"><Arrow dir="left" color="#767676" /></button>
          <button aria-label="前进" disabled><Arrow dir="right" color="#dcdcdc" /></button>
          <button aria-label="最近浏览的位置"><Chevron w={10} h={7} dir="down" stroke={2.4} color="#767676" /></button>
          <button aria-label="上移"><UpArrow /></button>
        </NavButtons>
        <AddressBox>
          <Crumbs>
            <Crumb><Folder /><Chevron w={8} h={12} dir="right" stroke={2.6} color="#767676" /></Crumb>
            {["此电脑", "Windows (C:)", "github", "CTK-master", "CTK-build"].map((name) => (
              <Crumb key={name}><CrumbLink href="#">{name}</CrumbLink><Chevron w={8} h={12} dir="right" stroke={2.6} color="#767676" /></Crumb>
            ))}
          </Crumbs>
          <AddressButton aria-label="以前的位置"><Chevron w={14} h={9} dir="down" stroke={2.6} color="#757575" /></AddressButton>
          <AddressButton aria-label="刷新" $divided><RefreshIcon /></AddressButton>
        </AddressBox>
        <SearchBox>
          <SearchIcon />
          <SearchInput type="text" aria-label="搜索" placeholder={'搜索"CTK-build"'} />
        </SearchBox>
      </AddressRow>

      <Main>
        <Sidebar>
          {tree.map(({ root, children }) => (
            <TreeGroup key={root.label}>
              <TreeRow root node={root} />
              {children.map((node) => <TreeRow key={node.label} node={node} />)}
            </TreeGroup>
          ))}
        </Sidebar>
        <Scrollbar>
          <ScrollButton aria-label="向上滚动"><Chevron w={13} h={10} dir="up" stroke={2.8} color="#5a5a5a" /></ScrollButton>
          <ScrollTrack><ScrollThumb /></ScrollTrack>
          <ScrollButton aria-label="向下滚动"><Chevron w={13} h={10} dir="down" stroke={2.8} color="#5a5a5a" /></ScrollButton>
        </Scrollbar>
        <ListPane>
          <Table>
            <colgroup>
              <Col $width={461} /><Col $width={243} /><Col $width={203} /><Col $width={135} />
            </colgroup>
            <thead>
              <tr>
                <HeadCell>
                  <HeadLabel $first>名称<SortMark><Chevron w={12} h={7} dir="up" stroke={1.2} color="#6d6d6d" /></SortMark></HeadLabel>
                </HeadCell>
                <HeadCell><HeadLabel>修改日期</HeadLabel></HeadCell>
                <HeadCell><HeadLabel>类型</HeadLabel></HeadCell>
                <HeadCell><HeadLabel>大小</HeadLabel></HeadCell>
              </tr>
            </thead>
            <tbody>
              {files.map(([name, time, type, size, kind]) => (
                <tr key={name}>
                  <NameCell>
                    <FileName>
                      <FileIconSlot>{kind === "folder" ? <Folder /> : <FileIcon kind={kind} />}</FileIconSlot>
                      {name}
                    </FileName>
                  </NameCell>
                  <DateCell>2023/1/4 {time}</DateCell>
                  <Cell>{type}</Cell>
                  <Cell $right>{size}</Cell>
                </tr>
              ))}
            </tbody>
          </Table>
        </ListPane>
      </Main>

      <StatusBar>
        <StatusText>17 个项目</StatusText>
        <ViewButtons>
          <ViewButton $on aria-label="详细信息"><DetailsViewIcon /></ViewButton>
          <ViewButton aria-label="大图标"><PictureIcon /></ViewButton>
        </ViewButtons>
      </StatusBar>
      <WindowEdge />
      <ContextMenu />
    </Window>
  );
}
